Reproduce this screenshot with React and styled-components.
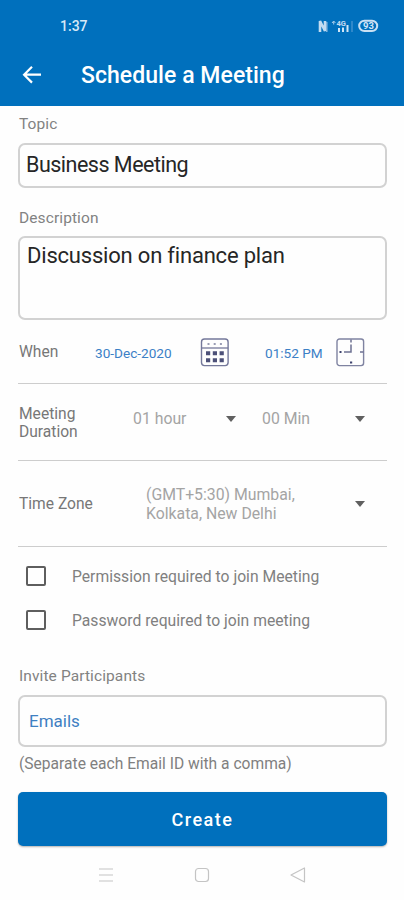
import React, { useState } from "react";
import styled, { createGlobalStyle } from "styled-components";

function StatusIcons() {
  return (
    <svg width="66" height="16" viewBox="0 0 66 16" fill="none">
      <path d="M3 14V3l5 10V3" stroke="#c3dcf1" strokeWidth="2.6" />
      <path d="M9.8 4v10" stroke="#8dbbe2" strokeWidth="1.4" />
      <path d="M15 5l1.7-2 1.7 2M16.7 3.5v3" stroke="#a9cdea" />
      <text x="19.5" y="8" fontSize="7.5" fontWeight="700" fill="#c3dcf1">
        4G
      </text>
      <path d="M22 14v-4M26 14V9.5M30.5 14V7" stroke="#d2e6f6" strokeWidth="2" />
      <path d="M35 14V3" stroke="#3b8fcd" strokeWidth="1.6" />
      <rect x="42.2" y="2.7" width="18" height="10.4" rx="5.2" stroke="#c9e0f3" strokeWidth="2" />
      <text x="46" y="11.3" fontSize="9.5" fontWeight="700" fill="#d2e6f6">
        93
      </text>
    </svg>
  );
}

function BackArrow() {
  return (
    <svg width="20" height="20" viewBox="0 0 20 20" fill="none">
      <path d="M19 9.7H2.8M10 1.8L2.1 9.7l7.9 7.9" stroke="#fff" strokeWidth="2.2" />
    </svg>
  );
}

function CalendarIcon() {
  return (
    <svg width="29" height="29" viewBox="0 0 29 29" fill="none">
      <rect x="1.5" y="1" width="26.6" height="26.6" rx="3" stroke="#74789a" strokeWidth="1.4" />
      <path d="M1.5 10h26.6" stroke="#74789a" strokeWidth="1.3" />
      <path d="M7.5 6h2M13.7 6h2M19.9 6h2" stroke="#9a9db4" strokeWidth="1.8" />
      <path
        d="M6 15.2h4.2M12.8 15.2h4.2M19.6 15.2h4.2M6 22.2h4.2M12.8 22.2h4.2M19.6 22.2h4.2"
        stroke="#4c5078"
        strokeWidth="4"
      />
    </svg>
  );
}

function ClockIcon() {
  return (
    <svg width="29" height="29" viewBox="0 0 29 29" fill="none">
      <rect x="1" y="1" width="26.6" height="26.6" rx="2.5" stroke="#7f83a1" strokeWidth="1.4" />
      <path d="M15 6.5V14H8M15 1.5v3M24 14h3.5" stroke="#6d7193" strokeWidth="1.5" />
      <path d="M3.5 14h2M14 24.6h2.2" stroke="#3f446e" strokeWidth="2" />
    </svg>
  );
}

function App() {
  const [options, setOptions] = useState({ permission: false, password: false });

  const toggle = (name) => {
    setOptions({ ...options, [name]: !options[name] });
  };

  return (
    <Screen>
      <GlobalStyle />
      <Header>
        <StatusBar>
          <Time>1:37</Time>
          <StatusIcons />
        </StatusBar>
        <TitleBar>
          <BackArrow />
          <Title>Schedule a Meeting</Title>
        </TitleBar>
      </Header>
      <Form>
        <Label $height={37}>Topic</Label>
        <Field $height={45}>Business Meeting</Field>
        <Label $height={48} $offset={12}>
          Description
        </Label>
        <Field $height={84} $multiline>
          Discussion on finance plan
        </Field>
        <Row $height={64}>
          <RowLabel>When</RowLabel>
          <DateValue>30-Dec-2020</DateValue>
          <CalendarIcon />
          <TimeValue>01:52 PM</TimeValue>
          <ClockIcon />
        </Row>
        <Row $height={77}>
          <RowLabel $width={114}>
            Meeting
            <br />
            Duration
          </RowLabel>
          <Select $width={103} $raise={8}>
            01 hour
            <Caret />
          </Select>
          <Select $width={103} $raise={8}>
            00 Min
            <Caret />
          </Select>
        </Row>
        <Row $height={86}>
          <RowLabel $width={127}>Time Zone</RowLabel>
          <Select $width={219}>
            <span>
              (GMT+5:30) Mumbai,
              <br />
              Kolkata, New Delhi
            </span>
            <Caret />
          </Select>
        </Row>
        <Options>
          <Option onClick={() => toggle("permission")}>
            <Box $checked={options.permission} />
            Permission required to join Meeting
          </Option>
          <Option onClick={() => toggle("password")}>
            <Box $checked={options.password} />
            Password required to join meeting
          </Option>
        </Options>
        <Label $height={53} $offset={16}>
          Invite Participants
        </Label>
        <Field $height={52} $hint>
          Emails
        </Field>
        <Hint>(Separate each Email ID with a comma)</Hint>
        <CreateButton>Create</CreateButton>
      </Form>
      <NavBar>
        <svg width="16" height="16" viewBox="0 0 16 16" fill="none" stroke="#c4c4c4">
          <path d="M1 2h14M1 8h14M1 14h14" strokeWidth="1.2" />
        </svg>
        <svg width="16" height="16" viewBox="0 0 16 16" fill="none" stroke="#c4c4c4">
          <rect x="1.5" y="1.5" width="13" height="13" rx="3" strokeWidth="1.2" />
        </svg>
        <svg width="16" height="16" viewBox="0 0 16 16" fill="none" stroke="#c4c4c4">
          <path d="M1 8L14.5 1v14z" strokeWidth="1.2" strokeLinejoin="round" />
        </svg>
      </NavBar>
    </Screen>
  );
}

const GlobalStyle = createGlobalStyle`
  * {
    box-sizing: border-box;
  }
  body {
    margin: 0;
    background: #fefefe;
    font-family: Roboto, "Liberation Sans", sans-serif;
  }
`;

const Screen = styled.div`
  width: 404px;
  height: 900px;
  display: flex;
  flex-direction: column;
  background: #fefefe;
  overflow: hidden;
`;

const Header = styled.header`
  height: 106px;
  flex-shrink: 0;
  background: #0070bd;
  color: white;
`;

const StatusBar = styled.div`
  height: 46px;
  padding: 5px 21px 0 60px;
  display: flex;
  align-items: center;
  justify-content: space-between;
`;

const Time = styled.span`
  font-size: 14px;
  font-weight: 500;
  color: #d5e8f7;
`;

const TitleBar = styled.div`
  height: 58px;
  padding-left: 22px;
  display: flex;
  align-items: center;
  gap: 39px;
`;

const Title = styled.h1`
  margin: 0;
  padding-top: 1px;
  font-size: 23px;
  font-weight: 500;
  letter-spacing: 0.05px;
`;

const Form = styled.main`
  padding: 0 17px 0 18px;
  display: flex;
  flex-direction: column;
`;

const Label = styled.div`
  height: ${(props) => props.$height}px;
  padding: ${(props) => props.$offset || 0}px 0 0 1px;
  line-height: 37px;
  font-size: 15.5px;
  letter-spacing: 0.1px;
  color: #828282;
`;

const Field = styled.div`
  height: ${(props) => props.$height}px;
  border: 2px solid #d2d2d2;
  border-radius: 7px;
  padding: ${(props) => (props.$hint ? "0 9px" : props.$multiline ? "5px 7px" : "0 6px 2px")};
  display: flex;
  align-items: ${(props) => (props.$multiline ? "flex-start" : "center")};
  font-size: ${(props) => (props.$hint ? 17 : props.$multiline ? 22 : 21.5)}px;
  letter-spacing: ${(props) => (props.$hint ? 0 : props.$multiline ? -0.2 : -0.5)}px;
  color: ${(props) => (props.$hint ? "#3e80c2" : "#262626")};
`;

const Row = styled.div`
  height: ${(props) => props.$height}px;
  padding: 2px 0 0 1px;
  border-bottom: 1.5px solid #cdcdcd;
  display: flex;
  align-items: center;
`;

const RowLabel = styled.div`
  width: ${(props) => props.$width || 76}px;
  flex-shrink: 0;
  font-size: 15.6px;
  line-height: 18.5px;
  color: #777;
`;

const DateValue = styled.span`
  width: 105px;
  font-size: 13.6px;
  color: #3c80c6;
`;

const TimeValue = styled(DateValue)`
  width: 71px;
  margin-left: 36px;
`;

const Select = styled.div`
  width: ${(props) => props.$width}px;
  margin-right: 26px;
  padding-bottom: ${(props) => props.$raise || 0}px;
  flex-shrink: 0;
  display: flex;
  align-items: center;
  justify-content: space-between;
  font-size: 15.8px;
  line-height: 18.5px;
  color: #a4a4a4;
`;

const Caret = styled.span`
  margin-bottom: 1px;
  border-left: 5px solid transparent;
  border-right: 5px solid transparent;
  border-top: 6px solid #606060;
`;

const Options = styled.div`
  padding: 7px 0 0 8px;
`;

const Option = styled.div`
  height: 44px;
  display: flex;
  align-items: center;
  gap: 26px;
  font-size: 15.7px;
  color: #808080;
`;

const Box = styled.span`
  width: 20px;
  height: 20px;
  border: 2px solid #5e5e5e;
  border-radius: 2px;
  background: ${(props) => (props.$checked ? "#0070bd" : "transparent")};
`;

const Hint = styled.div`
  height: 45px;
  line-height: 35px;
  padding-left: 1px;
  font-size: 15.6px;
  color: #808080;
`;

const CreateButton = styled.button`
  height: 54px;
  border: 0;
  border-radius: 5px;
  background: #0070bd;
  box-shadow: 0 1px 2px rgba(0, 0, 0, 0.3);
  color: white;
  font-family: inherit;
  font-size: 18px;
  font-weight: 500;
  letter-spacing: 1.5px;
`;

const NavBar = styled.nav`
  height: 58px;
  padding-top: 4px;
  display: flex;
  align-items: center;
  justify-content: center;
  gap: 80px;
`;

export default App;
